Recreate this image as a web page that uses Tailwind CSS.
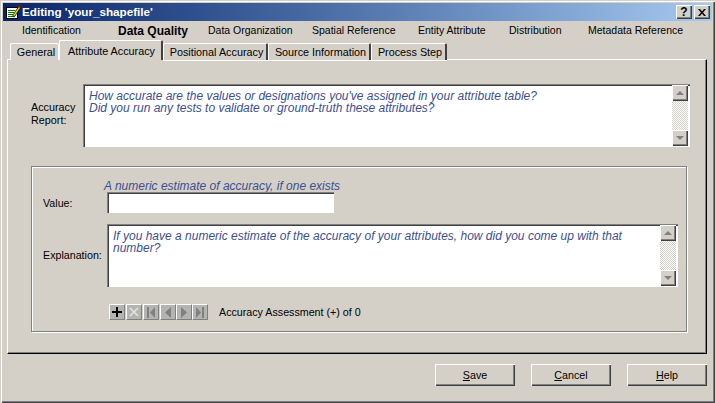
<!DOCTYPE html>
<html lang="en">
<head>
<meta charset="UTF-8">
<title>Editing 'your_shapefile'</title>
<script src="https://cdn.jsdelivr.net/npm/@tailwindcss/browser@4"></script>
</head>
<body class="w-[715px] h-[403px] overflow-hidden bg-[#d4d0c8] font-['Liberation_Sans',Arial,sans-serif] text-[12px] text-black">
<div class="w-[715px] h-[403px] p-[3px] shadow-[inset_1px_1px_0_#d4d0c8,inset_2px_2px_0_#fff,inset_-1px_-1px_0_#404040,inset_-2px_-2px_0_#808080]">

  <!-- title bar -->
  <div class="h-[18px] w-[709px] flex items-center bg-gradient-to-r from-[#0a246a] to-[#a6caf0] pl-[2px] pr-[2px]">
    <svg class="w-4 h-4 shrink-0" viewBox="0 0 16 16">
      <rect x="1.500" y="3.500" width="11" height="11" fill="#fff" stroke="#000"/>
      <path d="M3 6.500h7M3 8.500h6M3 10.500h5M3 12.500h7" stroke="#008000"/>
      <path d="M8 11l6-9 2 1-6 9-2 1z" fill="#e8d000" stroke="#000" stroke-width=".7"/>
      <path d="M14 1l2 1-1 2-2-1z" fill="#c00000"/>
    </svg>
    <span class="ml-[1px] font-bold text-[11.700px] leading-none text-white">Editing 'your_shapefile'</span>
    <div class="ml-auto flex gap-[2px]">
      <div class="w-4 h-[14px] bg-[#d4d0c8] flex items-center justify-center font-bold text-[12px] leading-none shadow-[inset_1px_1px_0_#fff,inset_-1px_-1px_0_#404040,inset_-2px_-2px_0_#808080]">?</div>
      <div class="w-4 h-[14px] bg-[#d4d0c8] flex items-center justify-center shadow-[inset_1px_1px_0_#fff,inset_-1px_-1px_0_#404040,inset_-2px_-2px_0_#808080]">
        <svg class="w-2 h-[7px]" viewBox="0 0 8 7"><path d="M0 0l2 0 2 2.500 2-2.500 2 0-3 3.500 3 3.500-2 0-2-2.500-2 2.500-2 0 3-3.500z" fill="#000"/></svg>
      </div>
    </div>
  </div>

  <!-- section nav -->
  <div class="h-[19px] flex items-center pl-[19px] text-[10.500px] leading-none whitespace-nowrap">
    <span class="w-[96px]">Identification</span>
    <span class="w-[90px] font-bold text-[12px]">Data Quality</span>
    <span class="w-[104px]">Data Organization</span>
    <span class="w-[106px]">Spatial Reference</span>
    <span class="w-[91px]">Entity Attribute</span>
    <span class="w-[79px]">Distribution</span>
    <span>Metadata Reference</span>
  </div>

  <!-- tabs -->
  <div class="relative z-10 h-[20px] -mb-px flex items-end pl-[7px] text-[10.800px] leading-none whitespace-nowrap">
    <div class="h-[17px] w-[49px] flex items-center justify-center pt-[1px] pl-[2px] bg-[#d4d0c8] rounded-t-[2px] border-t border-l border-white shadow-[inset_-1px_0_0_#fff]">General</div>
    <div class="h-[20px] w-[104px] flex items-center justify-center pt-[2px] pl-[2px] bg-[#d4d0c8] rounded-t-[2px] border-t border-l border-white border-r-2 border-r-[#404040]">Attribute Accuracy</div>
    <div class="h-[17px] w-[105px] flex items-center justify-center pt-[1px] pl-[3px] bg-[#d4d0c8] rounded-t-[2px] border-t border-l border-white border-r-2 border-r-[#404040] shadow-[0_1px_0_#fff]">Positional Accuracy</div>
    <div class="h-[17px] w-[103px] flex items-center justify-center pt-[1px] pl-[3px] bg-[#d4d0c8] rounded-t-[2px] border-t border-l border-white border-r-2 border-r-[#404040] shadow-[0_1px_0_#fff]">Source Information</div>
    <div class="h-[17px] w-[76px] flex items-center justify-center pt-[1px] pl-[3px] bg-[#d4d0c8] rounded-t-[2px] border-t border-l border-white border-r-2 border-r-[#404040] shadow-[0_1px_0_#fff]">Process Step</div>
  </div>

  <!-- tab panel -->
  <div class="ml-[4px] w-[700px] h-[295px] pt-[24px] border-t border-l border-white border-r border-r-black border-b border-b-black shadow-[inset_-1px_-1px_0_#808080]">

    <div class="flex">
      <div class="w-[75px] pt-[17px] text-[10.800px] leading-[13px] pl-[23px]">Accuracy<br>Report:</div>
      <div class="w-[607px] h-[63px] flex bg-white text-[#3c4f92] italic leading-[12px] shadow-[inset_1px_1px_0_#808080,inset_2px_2px_0_#404040,inset_-1px_-1px_0_#fff]">
        <p class="flex-1 pt-[6px] pl-[6px]">How accurate are the values or designations you've assigned in your attribute table?<br>Did you run any tests to validate or ground-truth these attributes?</p>
        <div class="w-[16px] my-[1px] mr-[2px] flex flex-col justify-between bg-[repeating-conic-gradient(#d4d0c8_0_25%,#fff_0_50%)] bg-[length:2px_2px]">
          <div class="h-[16px] bg-[#d4d0c8] flex items-center justify-center shadow-[inset_1px_1px_0_#fff,inset_-1px_-1px_0_#404040,inset_-2px_-2px_0_#808080]">
            <svg class="w-[8px] h-[4px]" viewBox="0 0 8 4"><path d="M4 0l4 4h-8z" fill="#808080"/></svg>
          </div>
          <div class="h-[16px] bg-[#d4d0c8] flex items-center justify-center shadow-[inset_1px_1px_0_#fff,inset_-1px_-1px_0_#404040,inset_-2px_-2px_0_#808080]">
            <svg class="w-[8px] h-[4px]" viewBox="0 0 8 4"><path d="M0 0h8l-4 4z" fill="#808080"/></svg>
          </div>
        </div>
      </div>
    </div>

    <!-- group box -->
    <div class="ml-[23px] mt-[19px] w-[656px] h-[166px] pl-[11px] border border-[#808080] shadow-[inset_1px_1px_0_#fff,1px_1px_0_#fff]">
      <p class="pl-[61px] pt-[13px] h-[25px] text-[#3c4f92] italic leading-[12px] whitespace-nowrap">A numeric estimate of accuracy, if one exists</p>
      <div class="flex">
        <div class="w-[64px] pt-[5px] text-[10.700px] leading-[13px]">Value:</div>
        <div class="w-[227px] h-[21px] bg-white shadow-[inset_1px_1px_0_#808080,inset_2px_2px_0_#404040,inset_-1px_-1px_0_#fff]"></div>
      </div>
      <div class="flex mt-[11px]">
        <div class="w-[64px] pt-[25px] text-[10.700px] leading-[13px]">Explanation:</div>
        <div class="w-[571px] h-[63px] flex bg-white text-[#3c4f92] italic leading-[12px] shadow-[inset_1px_1px_0_#808080,inset_2px_2px_0_#404040,inset_-1px_-1px_0_#fff]">
          <p class="flex-1 pt-[6px] pl-[6px] pr-[30px]">If you have a numeric estimate of the accuracy of your attributes, how did you come up with that number?</p>
          <div class="w-[16px] my-[1px] mr-[2px] flex flex-col justify-between bg-[repeating-conic-gradient(#d4d0c8_0_25%,#fff_0_50%)] bg-[length:2px_2px]">
            <div class="h-[16px] bg-[#d4d0c8] flex items-center justify-center shadow-[inset_1px_1px_0_#fff,inset_-1px_-1px_0_#404040,inset_-2px_-2px_0_#808080]">
              <svg class="w-[8px] h-[4px]" viewBox="0 0 8 4"><path d="M4 0l4 4h-8z" fill="#808080"/></svg>
            </div>
            <div class="h-[16px] bg-[#d4d0c8] flex items-center justify-center shadow-[inset_1px_1px_0_#fff,inset_-1px_-1px_0_#404040,inset_-2px_-2px_0_#808080]">
              <svg class="w-[8px] h-[4px]" viewBox="0 0 8 4"><path d="M0 0h8l-4 4z" fill="#808080"/></svg>
            </div>
          </div>
        </div>
      </div>
      <!-- record navigator -->
      <div class="flex items-center mt-[17px] ml-[66px]">
        <div class="w-4 h-4 mr-[1px] bg-[#b4b4b0] flex items-center justify-center border-t border-l border-white border-r border-b border-r-[#808080] border-b-[#808080]">
          <svg class="w-[10px] h-[10px]" viewBox="0 0 10 10"><path d="M4 0h2v4h4v2h-4v4h-2v-4h-4v-2h4z" fill="#000"/></svg>
        </div>
        <div class="w-4 h-4 mr-[1px] bg-[#b4b4b0] flex items-center justify-center border-t border-l border-white border-r border-b border-r-[#808080] border-b-[#808080]">
          <svg class="w-[10px] h-[10px]" viewBox="0 0 10 10"><path d="M1 1l8 8M9 1l-8 8" stroke="#e4e4e4" stroke-width="1.500"/></svg>
        </div>
        <div class="w-4 h-4 mr-[1px] bg-[#b4b4b0] flex items-center justify-center border-t border-l border-white border-r border-b border-r-[#808080] border-b-[#808080]">
          <svg class="w-[10px] h-[11px]" viewBox="0 0 10 11"><path d="M1 0h2v11h-2zM9 0v11l-5-5.500z" fill="#808080"/></svg>
        </div>
        <div class="w-4 h-4 bg-[#b4b4b0] flex items-center justify-center border-t border-l border-white border-r border-b border-r-[#808080] border-b-[#808080]">
          <svg class="w-[6px] h-[11px]" viewBox="0 0 6 11"><path d="M6 0v11l-6-5.500z" fill="#808080"/></svg>
        </div>
        <div class="w-4 h-4 bg-[#b4b4b0] flex items-center justify-center border-t border-l border-white border-r border-b border-r-[#808080] border-b-[#808080]">
          <svg class="w-[6px] h-[11px]" viewBox="0 0 6 11"><path d="M0 0v11l6-5.500z" fill="#808080"/></svg>
        </div>
        <div class="w-4 h-4 bg-[#b4b4b0] flex items-center justify-center border-t border-l border-white border-r border-b border-r-[#808080] border-b-[#808080]">
          <svg class="w-[10px] h-[11px]" viewBox="0 0 10 11"><path d="M7 0h2v11h-2zM1 0v11l5-5.500z" fill="#808080"/></svg>
        </div>
        <span class="ml-[11px] text-[10.700px] leading-none whitespace-nowrap">Accuracy Assessment (+) of 0</span>
      </div>
    </div>
  </div>

  <!-- dialog buttons -->
  <div class="flex justify-end gap-[16px] mt-[10px] pr-[5px]">
    <button class="w-[80px] h-[22px] bg-[#d4d0c8] text-[10.700px] leading-none shadow-[inset_1px_1px_0_#fff,inset_-1px_-1px_0_#404040,inset_-2px_-2px_0_#808080]"><u>S</u>ave</button>
    <button class="w-[80px] h-[22px] bg-[#d4d0c8] text-[10.700px] leading-none shadow-[inset_1px_1px_0_#fff,inset_-1px_-1px_0_#404040,inset_-2px_-2px_0_#808080]"><u>C</u>ancel</button>
    <button class="w-[80px] h-[22px] bg-[#d4d0c8] text-[10.700px] leading-none shadow-[inset_1px_1px_0_#fff,inset_-1px_-1px_0_#404040,inset_-2px_-2px_0_#808080]"><u>H</u>elp</button>
  </div>
</div>
</body>
</html>
